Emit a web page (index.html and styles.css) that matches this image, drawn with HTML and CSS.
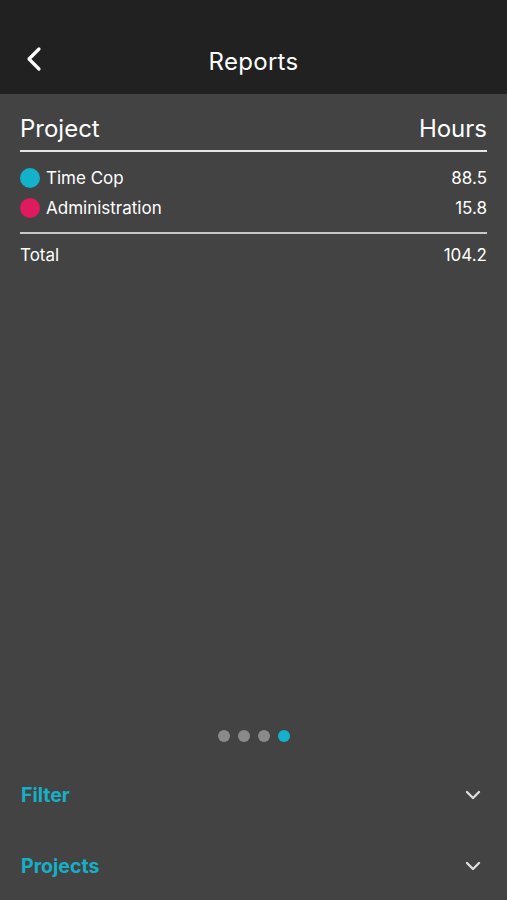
FILE: index.html
```html
<!DOCTYPE html>
<html>
<head>
<meta charset="utf-8">
<link rel="stylesheet" href="styles.css">
</head>
<body>
<div class="app">
  <header class="topbar">
    <span class="back">
      <svg width="20" height="26" viewBox="0 0 20 26"><path d="M15 3 L5 13 L15 23" fill="none" stroke="#fff" stroke-width="3.2" stroke-linecap="round" stroke-linejoin="round"/></svg>
    </span>
    <h1 class="title">Reports</h1>
  </header>
  <main class="content">
    <section class="report">
      <div class="head-row">
        <span>Project</span>
        <span>Hours</span>
      </div>
      <div class="rows">
        <div class="row"><span class="name"><i class="dot teal"></i>Time Cop</span><span>88.5</span></div>
        <div class="row"><span class="name"><i class="dot pink"></i>Administration</span><span>15.8</span></div>
      </div>
      <div class="total-row"><span>Total</span><span>104.2</span></div>
    </section>
    <div class="spacer"></div>
    <div class="pager">
      <i class="pdot"></i><i class="pdot"></i><i class="pdot"></i><i class="pdot active"></i>
    </div>
    <div class="section-row">
      <span class="sect">Filter</span>
      <svg class="chev" width="16" height="10" viewBox="0 0 16 10"><path d="M2 2 L8 8 L14 2" fill="none" stroke="#ddd" stroke-width="2.4" stroke-linecap="round" stroke-linejoin="round"/></svg>
    </div>
    <div class="section-row">
      <span class="sect">Projects</span>
      <svg class="chev" width="16" height="10" viewBox="0 0 16 10"><path d="M2 2 L8 8 L14 2" fill="none" stroke="#ddd" stroke-width="2.4" stroke-linecap="round" stroke-linejoin="round"/></svg>
    </div>
  </main>
</div>
</body>
</html>
```
FILE: styles.css
```css
* { box-sizing: border-box; }
html, body { margin: 0; padding: 0; height: 100%; }
body {
  background: #434343;
  font-family: Inter, "Open Sans", sans-serif;
  color: #fff;
}
.app {
  display: flex;
  flex-direction: column;
  height: 900px;
  overflow: hidden;
}
.topbar {
  height: 94px;
  background: #212121;
  display: flex;
  align-items: center;
  justify-content: center;
  position: relative;
  padding-top: 28px;
}
.back {
  position: absolute;
  left: 24px;
  top: 46px;
  display: block;
}
.back svg { display: block; }
.title {
  margin: 0;
  font-size: 24px;
  font-weight: 400;
  letter-spacing: 0.3px;
}
.content {
  flex: 1;
  display: flex;
  flex-direction: column;
  padding: 0 20px 0 21px;
}
.report { padding-top: 19px; }
.head-row {
  display: flex;
  justify-content: space-between;
  font-size: 24px;
  line-height: 32px;
  padding-bottom: 5px;
  border-bottom: 2px solid #e6e6e6;
  margin-left: -1px;
}
.rows {
  padding: 11px 0 9px;
  border-bottom: 2px solid #c8c8c8;
  margin-left: -1px;
}
.row {
  display: flex;
  justify-content: space-between;
  align-items: center;
  font-size: 17px;
  height: 30px;
}
.name { display: flex; align-items: center; }
.dot {
  width: 20px;
  height: 20px;
  border-radius: 50%;
  margin-right: 6px;
  display: inline-block;
}
.teal { background: #12b2cb; }
.pink { background: #e01a5f; }
.total-row {
  display: flex;
  justify-content: space-between;
  font-size: 17px;
  padding-top: 9px;
  line-height: 24px;
  margin-left: -1px;
}
.spacer { flex: 1; }
.pager {
  display: flex;
  justify-content: center;
  gap: 8px;
  margin-left: -1px;
  margin-bottom: 16px;
}
.pdot {
  width: 12px;
  height: 12px;
  border-radius: 50%;
  background: #8a8a8a;
  display: block;
}
.pdot.active { background: #12b2cb; }
.section-row {
  display: flex;
  justify-content: space-between;
  align-items: center;
  height: 71px;
  padding-top: 3px;
  padding-right: 6px;
}
.sect {
  color: #17afc7;
  font-weight: 700;
  font-size: 19.5px;
}
.chev { display: block; }
```
